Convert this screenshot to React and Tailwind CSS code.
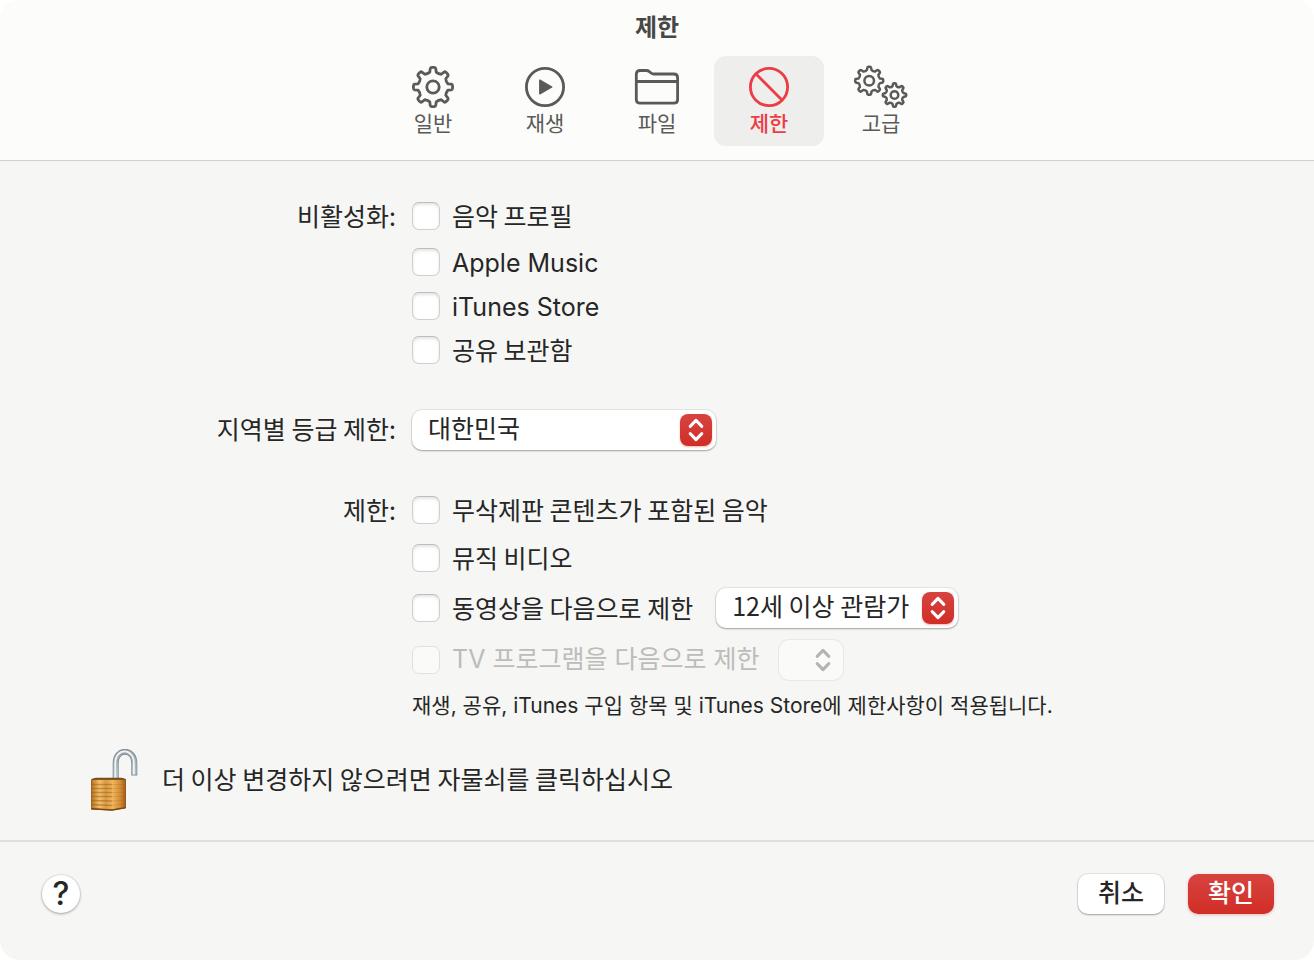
import React from 'react';

const KOREAN = "font-['Noto_Sans_CJK_KR',sans-serif]";
const LATIN = "font-['Inter','Noto_Sans_CJK_KR',sans-serif]";

// Closed outline of a cog: each tooth goes root -> tip -> tip -> root
const gearPath = (cx, cy, teeth, outer, inner) => {
    const step = (Math.PI * 2) / teeth;
    const at = (angle, radius) =>
        `${(cx + Math.sin(angle) * radius).toFixed(2)} ${(cy - Math.cos(angle) * radius).toFixed(2)}`;
    let d = '';
    for (let i = 0; i < teeth; i += 1) {
        const a = i * step;
        d += `${i === 0 ? 'M' : 'L'}${at(a - step * 0.27, inner)}`;
        d += `L${at(a - step * 0.19, outer - 1)}`;
        d += `Q${at(a - step * 0.17, outer)} ${at(a - step * 0.08, outer)}`;
        d += `L${at(a + step * 0.08, outer)}`;
        d += `Q${at(a + step * 0.17, outer)} ${at(a + step * 0.19, outer - 1)}`;
        d += `L${at(a + step * 0.27, inner)}`;
        d += `Q${at(a + step * 0.5, inner - 1.2)} ${at(a + step * 0.73, inner)}`;
    }
    return `${d}Z`;
};

const GearIcon = () => (
    <svg width="44" height="44" viewBox="0 0 44 44" fill="none" stroke="currentColor" strokeWidth="2.8" strokeLinejoin="round" aria-hidden="true">
        <path d={gearPath(22, 22, 8, 19.6, 15.2)} />
        <circle cx="22" cy="22" r="6.2" />
    </svg>
);

const GearsIcon = () => (
    <svg width="56" height="44" viewBox="0 0 56 44" fill="none" stroke="currentColor" strokeWidth="2.5" strokeLinejoin="round" aria-hidden="true">
        <path d={gearPath(16.2, 15.8, 8, 14, 11)} />
        <circle cx="16.2" cy="15.8" r="4.8" />
        <path d={gearPath(41.5, 30, 8, 11.7, 9.2)} />
        <circle cx="41.5" cy="30" r="3.8" />
    </svg>
);

const PlayIcon = () => (
    <svg width="44" height="44" viewBox="0 0 44 44" fill="none" stroke="currentColor" strokeWidth="2.8" aria-hidden="true">
        <circle cx="22" cy="22" r="18.6" />
        <path d="M16.8 15.2v13.6l12-6.8z" fill="currentColor" strokeWidth="1.4" strokeLinejoin="round" />
    </svg>
);

const FolderIcon = () => (
    <svg width="46" height="44" viewBox="0 0 46 44" fill="none" stroke="currentColor" strokeWidth="2.8" aria-hidden="true">
        <path d="M2.3 9.2Q2.3 5.5 6 5.5H12.2Q14 5.5 15.3 6.6L17 8Q18.2 9 20 9H39.8Q43.6 9 43.6 12.8V34.4Q43.6 38.2 39.8 38.2H6Q2.3 38.2 2.3 34.4Z" />
        <path d="M2.3 16.5H43.6" />
    </svg>
);

const RestrictIcon = () => (
    <svg width="44" height="44" viewBox="0 0 44 44" fill="none" stroke="currentColor" strokeWidth="2.8" aria-hidden="true">
        <circle cx="22" cy="22" r="18.6" />
        <path d="M8.8 8.8 35.2 35.2" />
    </svg>
);

const PadlockIcon = () => (
    <svg width="48" height="64" viewBox="0 0 48 64" fill="none" aria-hidden="true">
        <defs>
            <linearGradient id="brass" x1="0" x2="1" y1="0" y2="0">
                <stop offset="0" stopColor="#b87420" />
                <stop offset="0.24" stopColor="#f3c06c" />
                <stop offset="0.42" stopColor="#dc9a42" />
                <stop offset="0.62" stopColor="#efb65c" />
                <stop offset="0.85" stopColor="#d38b32" />
                <stop offset="1" stopColor="#a05f18" />
            </linearGradient>
            <linearGradient id="steel" x1="0" x2="0" y1="0" y2="1">
                <stop offset="0" stopColor="#98a2a8" />
                <stop offset="1" stopColor="#b9c5cc" />
            </linearGradient>
        </defs>
        <path d="M25.7 31V14C25.7 -1 44.3 -1 44.3 14V26.4" stroke="#7f8a90" strokeWidth="6" />
        <path d="M25.7 31V14C25.7 -1 44.3 -1 44.3 14V25.6" stroke="url(#steel)" strokeWidth="4.6" />
        <path d="M25.3 31V14C25.3 -1.4 43.9 -1.4 43.9 14V25.6" stroke="#eef4f7" strokeWidth="1.8" />
        <path d="M1 31 5 29H32L36 30.5V59L22 61.5 1 60.5Z" fill="#8f5518" />
        <path d="M1.5 31H35.5V58.6L22 60.6 1.5 59.6Z" fill="url(#brass)" />
        <path d="M1.5 35.5H22M1.5 39.5H22M1.5 43.5H22M1.5 47.5H22M1.5 51.5 22 52M1.5 55.5 22 56.5" stroke="#8f5212" strokeOpacity="0.45" strokeWidth="1.3" />
        <path d="M22 35.5H35.5M22 39.5H35.5M22 43.5H35.5M22 47.5H35.5M22 52 35.5 51M22 56.5 35.5 55" stroke="#9a5c17" strokeOpacity="0.2" strokeWidth="1.2" />
        <path d="M1.5 59.8 22 61 35.5 58.8" stroke="#7d4512" strokeWidth="1.4" />
        <path d="M1.5 30.6 6 29.4H31.5L35.5 30.6" stroke="#6b5024" strokeWidth="1.4" />
    </svg>
);

const Chevrons = () => (
    <svg width="32" height="32" viewBox="0 0 32 32" fill="none" stroke="currentColor" strokeWidth="3" strokeLinecap="round" strokeLinejoin="round" aria-hidden="true">
        <path d="M10.2 12.4 16 6.4 21.8 12.4M10.2 19.6 16 25.6 21.8 19.6" />
    </svg>
);

const TABS = [
    { label: '일반', Icon: GearIcon },
    { label: '재생', Icon: PlayIcon },
    { label: '파일', Icon: FolderIcon },
    { label: '제한', Icon: RestrictIcon, active: true },
    { label: '고급', Icon: GearsIcon },
];

const CheckRow = ({ id, label, latin, disabled }) => (
    <div className="flex h-7 items-center gap-3">
        <input
            id={id}
            type="checkbox"
            disabled={disabled}
            className={`size-7 shrink-0 appearance-none rounded-[7px] border ${disabled ? 'border-[#e0e0df] bg-[#fafaf9]' : 'border-[#cfcfce] border-t-[#bdbdbc] bg-white shadow-[inset_0_2px_3px_rgba(0,0,0,0.1)] checked:bg-[#d3332c]'}`}
        />
        <label htmlFor={id} className={`text-[25px] leading-7 whitespace-nowrap ${latin ? `${LATIN} pt-0.5` : 'pb-0.5'} ${disabled ? 'text-[#bcbcbb]' : ''}`}>
            {label}
        </label>
    </div>
);

const PopUp = ({ id, label, options, width, disabled }) => (
    <div className={`relative ${width}`}>
        <select
            id={id}
            aria-label={label}
            disabled={disabled}
            className={`block h-10 w-full appearance-none rounded-[10px] pr-10 pb-1.5 pl-4 text-[25px] leading-8 ${disabled ? 'bg-[#fafaf9] shadow-[0_0_1px_1px_rgba(0,0,0,0.06)]' : 'bg-white shadow-[0_0_0_1px_rgba(0,0,0,0.06),0_1px_2px_rgba(0,0,0,0.3)]'}`}
        >
            {options.map((option) => (
                <option key={option}>{option}</option>
            ))}
        </select>
        <span className={`pointer-events-none absolute top-1 right-1 rounded-lg ${disabled ? 'text-[#b4b4b3]' : 'bg-linear-to-b from-[#d8433f] to-[#d02d25] text-white shadow-[0_1px_2px_rgba(208,45,37,0.35)]'}`}>
            <Chevrons />
        </span>
    </div>
);

const App = () => {
    return (
        <div className="min-h-screen bg-white">
            <div className={`${KOREAN} flex min-h-screen flex-col overflow-hidden rounded-[20px] bg-[#f6f6f4] text-[#262626]`}>
                <header className="border-b border-[#d0d0cf] bg-[#fcfcfa] pb-3.5">
                    <h1 className="pt-2.5 text-center text-2xl leading-8 font-bold text-[#474746]">제한</h1>
                    <nav className="mt-3.5 flex justify-center gap-0.5">
                        {TABS.map(({ label, Icon, active }) => (
                            <button
                                key={label}
                                type="button"
                                className={`flex h-[90px] w-[110px] flex-col items-center rounded-xl pt-[9px] ${active ? 'bg-[#eeeeed] font-medium text-[#ec3d45]' : 'text-[#5a5a58]'}`}
                            >
                                <Icon />
                                <span className="text-[21px] leading-[26px]">{label}</span>
                            </button>
                        ))}
                    </nav>
                </header>

                <main className="flex-1 pt-[41px] pb-6">
                    <div className="grid grid-cols-[396px_1fr] gap-x-4">
                        <p className="text-right text-[25px] leading-[26px]">비활성화:</p>
                        <div className="flex flex-col gap-4">
                            <div className="pb-0.5">
                                <CheckRow id="profile" label="음악 프로필" />
                            </div>
                            <CheckRow id="apple-music" label="Apple Music" latin />
                            <CheckRow id="itunes-store" label="iTunes Store" latin />
                            <CheckRow id="shared" label="공유 보관함" />
                        </div>

                        <label htmlFor="region" className="mt-[46px] text-right text-[25px] leading-9">지역별 등급 제한:</label>
                        <div className="mt-[46px]">
                            <PopUp id="region" options={['대한민국']} width="w-[304px]" />
                        </div>

                        <p className="mt-[46px] text-right text-[25px] leading-[26px]">제한:</p>
                        <div className="mt-[46px] flex flex-col">
                            <CheckRow id="explicit" label="무삭제판 콘텐츠가 포함된 음악" />
                            <div className="mt-5">
                                <CheckRow id="video" label="뮤직 비디오" />
                            </div>
                            <div className="mt-4 flex items-center gap-[23px]">
                                <CheckRow id="movies" label="동영상을 다음으로 제한" />
                                <PopUp label="동영상 등급" options={['12세 이상 관람가']} width="w-[242px]" />
                            </div>
                            <div className="mt-3 flex items-center gap-5">
                                <div className={LATIN}>
                                    <CheckRow id="tv" label="TV 프로그램을 다음으로 제한" disabled />
                                </div>
                                <PopUp label="TV 프로그램 등급" options={['']} width="w-16" disabled />
                            </div>
                            <p className={`${LATIN} mt-3 text-[21px] leading-7`}>재생, 공유, iTunes 구입 항목 및 iTunes Store에 제한사항이 적용됩니다.</p>
                        </div>
                    </div>

                    <div className="mt-[29px] flex items-center gap-6 pl-[90px]">
                        <button type="button" aria-label="자물쇠">
                            <PadlockIcon />
                        </button>
                        <p className="pb-1.5 text-[25px] leading-8">더 이상 변경하지 않으려면 자물쇠를 클릭하십시오</p>
                    </div>
                </main>

                <footer className="flex items-center gap-6 border-t-2 border-[#dededc] pt-8 pr-10 pb-[46px] pl-[42px]">
                    <button type="button" aria-label="도움말" className={`${LATIN} mr-auto size-[38px] rounded-full bg-white text-[32px] leading-[38px] font-medium shadow-[0_0_0_1px_rgba(0,0,0,0.05),0_1px_3px_rgba(0,0,0,0.3)]`}>
                        ?
                    </button>
                    <button type="button" className="h-10 w-[86px] rounded-[10px] bg-white pb-1.5 text-[25px] leading-8 font-medium shadow-[0_0_0_1px_rgba(0,0,0,0.06),0_1px_2px_rgba(0,0,0,0.3)]">
                        취소
                    </button>
                    <button type="button" className="h-10 w-[86px] rounded-[10px] bg-linear-to-b from-[#d8433f] to-[#d02d25] pb-1.5 text-[25px] leading-8 font-medium text-white shadow-[0_1px_3px_rgba(208,45,37,0.3)]">
                        확인
                    </button>
                </footer>
            </div>
        </div>
    );
};

export default App;
